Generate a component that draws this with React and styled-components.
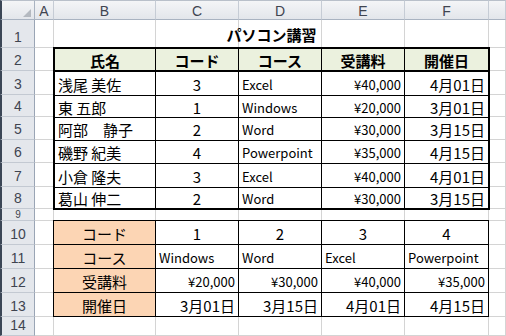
import React from 'react';
import styled, { createGlobalStyle } from 'styled-components';

const GlobalStyle = createGlobalStyle`
  html, body { margin: 0; padding: 0; background: #fff; }
  body { font-family: "Noto Sans CJK JP", "Liberation Sans", sans-serif; }
`;

const GRID = '#d4d4d4';
const FONT = '"Noto Sans CJK JP", "Liberation Sans", sans-serif';
const HEAD_FONT = '"Liberation Sans", "DejaVu Sans", sans-serif';

// --- sheet grid ---
const Sheet = styled.div`
  display: grid;
  grid-template-columns: 35px 19px 102px 83px 83px 83px 84px 1fr;
  grid-template-rows: 20px 28px 23px 24px 22px 23px 23px 24px 22px 12px 24px 24px 24px 24px 1fr;
  width: 506px;
  height: 336px;
  overflow: hidden;
  font-family: ${FONT};
  color: #000;
`;

const Corner = styled.div`
  grid-column: 1;
  grid-row: 1;
  box-sizing: border-box;
  border-left: 2px solid #3b4656;
  border-top: 1px solid #b9c0ca;
  border-right: 1px solid #a9b3c1;
  border-bottom: 1px solid #a9b3c1;
  background: linear-gradient(#f4f5f7, #e3e6eb);
  display: flex;
  justify-content: flex-end;
  align-items: flex-end;
  padding: 0 3px 2px 0;
`;

const CornerMark = styled.div`
  width: 8px;
  height: 8px;
  background: #b4b9c0;
  clip-path: polygon(100% 0, 100% 100%, 0 100%);
`;

const ColHead = styled.div`
  box-sizing: border-box;
  border-top: 1px solid #b9c0ca;
  border-right: 1px solid #c6ccd5;
  border-bottom: 1px solid #a9b3c1;
  background: linear-gradient(#f4f5f7, #e3e6eb);
  display: flex;
  align-items: center;
  justify-content: center;
  font-family: ${HEAD_FONT};
  font-size: 14px;
  color: #3f4450;
  padding-top: 2px;
`;

const RowHead = styled.div`
  box-sizing: border-box;
  border-left: 2px solid #3b4656;
  border-right: 1px solid #9aa5b5;
  border-bottom: 1px solid #c3c9d2;
  background: #e4e7ec;
  display: flex;
  align-items: ${(p) => (p.$small ? 'center' : 'flex-end')};
  justify-content: center;
  font-family: ${HEAD_FONT};
  font-size: ${(p) => (p.$small ? '10px' : '14px')};
  line-height: ${(p) => (p.$small ? '11px' : '16px')};
  color: #3f4450;
  overflow: hidden;
  padding-bottom: ${(p) => (p.$small ? '0' : '2px')};
`;

const Cell = styled.div`
  box-sizing: border-box;
  border-right: 1px solid ${GRID};
  border-bottom: 1px solid ${GRID};
  background: #fff;
`;

const Title = styled.div`
  grid-column: 3 / 8;
  grid-row: 2;
  display: flex;
  align-items: flex-end;
  justify-content: center;
  font-weight: bold;
  font-size: 15px;
  padding-bottom: 3px;
`;

// --- course table ---
const CourseTable = styled.div`
  grid-column: 3 / 8;
  grid-row: 3 / 10;
  margin: -1px;
  box-sizing: border-box;
  border: 2px solid #000;
  background: #fff;
  display: grid;
  grid-template-columns: 101px 83px 83px 83px 1fr;
  grid-template-rows: 23px 24px 22px 23px 23px 24px 1fr;
`;

const LookupTable = styled.div`
  grid-column: 3 / 8;
  grid-row: 11 / 15;
  margin: -1px 0 0 -1px;
  box-sizing: border-box;
  border: 1px solid #000;
  background: #fff;
  display: grid;
  grid-template-columns: 102px 83px 83px 83px 1fr;
  grid-template-rows: 24px 24px 24px 1fr;
`;

const TCell = styled.div`
  box-sizing: border-box;
  border-right: ${(p) => (p.$lastCol ? 'none' : '1px solid #000')};
  border-bottom: ${(p) => (p.$lastRow ? 'none' : p.$thick ? '2px solid #000' : '1px solid #000')};
  background: ${(p) => p.$bg || 'transparent'};
  display: flex;
  align-items: center;
  justify-content: ${(p) => (p.$align === 'right' ? 'flex-end' : p.$align === 'center' ? 'center' : 'flex-start')};
  padding: 1px 3px 0 3px;
  font-size: ${(p) => (p.$latin ? '13px' : '15px')};
  font-weight: ${(p) => (p.$bold ? 'bold' : 'normal')};
  white-space: pre;
  overflow: hidden;
`;

const columns = ['A', 'B', 'C', 'D', 'E', 'F', ''];

const courses = [
  ['浅尾 美佐', '3', 'Excel', '¥40,000', '4月01日'],
  ['東 五郎', '1', 'Windows', '¥20,000', '3月01日'],
  ['阿部　静子', '2', 'Word', '¥30,000', '3月15日'],
  ['磯野 紀美', '4', 'Powerpoint', '¥35,000', '4月15日'],
  ['小倉 隆夫', '3', 'Excel', '¥40,000', '4月01日'],
  ['葛山 伸二', '2', 'Word', '¥30,000', '3月15日'],
];

const align = ['left', 'center', 'left', 'right', 'right'];

const lookup = [
  ['コード', '1', '2', '3', '4'],
  ['コース', 'Windows', 'Word', 'Excel', 'Powerpoint'],
  ['受講料', '¥20,000', '¥30,000', '¥40,000', '¥35,000'],
  ['開催日', '3月01日', '3月15日', '4月01日', '4月15日'],
];
const lookupAlign = ['center', 'left', 'right', 'right'];

export default function App() {
  const rowCount = 14;
  const gridCells = [];
  for (let r = 1; r <= rowCount; r++) {
    gridCells.push(
      <RowHead key={'rh' + r} $small={r === 9} style={{ gridRow: r + 1, gridColumn: 1 }}>
        {r}
      </RowHead>
    );
    for (let c = 2; c <= 8; c++) {
      gridCells.push(<Cell key={r + '-' + c} style={{ gridRow: r + 1, gridColumn: c }} />);
    }
  }

  return (
    <>
      <GlobalStyle />
      <Sheet>
        <Corner>
          <CornerMark />
        </Corner>
        {columns.map((c, i) => (
          <ColHead key={'ch' + i} style={{ gridColumn: i + 2 }}>
            {c}
          </ColHead>
        ))}
        {gridCells}
        <Title>パソコン講習</Title>

        <CourseTable>
          {['氏名', 'コード', 'コース', '受講料', '開催日'].map((h, i) => (
            <TCell key={'h' + i} $bg="#ebf1de" $bold $align="center" $thick $lastCol={i === 4}>
              {h}
            </TCell>
          ))}
          {courses.map((row, ri) =>
            row.map((v, ci) => (
              <TCell
                key={ri + '-' + ci}
                $align={align[ci]}
                $latin={ci === 2 || ci === 3}
                $lastCol={ci === 4}
                $lastRow={ri === courses.length - 1}
              >
                {v}
              </TCell>
            ))
          )}
        </CourseTable>

        <LookupTable>
          {lookup.map((row, ri) =>
            row.map((v, ci) => (
              <TCell
                key={ri + '-' + ci}
                $bg={ci === 0 ? '#fcd5b4' : undefined}
                $align={ci === 0 ? 'center' : lookupAlign[ri]}
                $latin={ci > 0 && (ri === 1 || ri === 2)}
                $lastCol={ci === 4}
                $lastRow={ri === lookup.length - 1}
              >
                {v}
              </TCell>
            ))
          )}
        </LookupTable>
      </Sheet>
    </>
  );
}
